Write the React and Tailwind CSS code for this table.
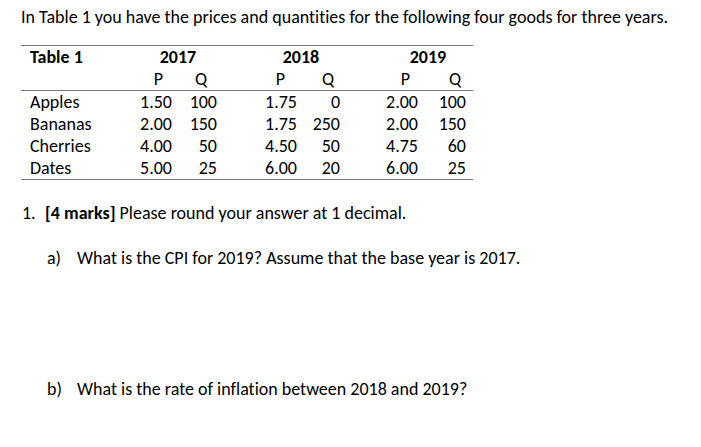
import React from "react";

const rows = [
  { name: "Apples", v: ["1.50", "100", "1.75", "0", "2.00", "100"] },
  { name: "Bananas", v: ["2.00", "150", "1.75", "250", "2.00", "150"] },
  { name: "Cherries", v: ["4.00", "50", "4.50", "50", "4.75", "60"] },
  { name: "Dates", v: ["5.00", "25", "6.00", "20", "6.00", "25"] },
];

// column widths: label, P17, Q17, P18, Q18, P19, Q19
const cols = "grid grid-cols-[79px_72px_45px_80px_43px_78px_55px]";

const App = () => {
  return (
    <div
      className="w-[701px] h-[447px] bg-white text-black text-[18px] leading-[22px] [font-variant-ligatures:none]"
      style={{ fontFamily: "Carlito, 'Open Sans', sans-serif" }}
    >
      <p className="pl-[21px] pt-[6px]">
        In Table 1 you have the prices and quantities for the following four goods for three years.
      </p>

      <div className="ml-[21px] mt-[17px] w-[452px]">
        <div className="border-t border-[#7a7a7a]" />
        <div className={`${cols} font-bold`}>
          <div className="pl-[9px]">Table 1</div>
          <div className="col-span-2 text-center pl-[39px]">2017</div>
          <div className="col-span-2 text-center pl-[45px]">2018</div>
          <div className="col-span-2 text-center pl-[43px]">2019</div>
        </div>
        <div className={cols}>
          <div />
          <div className="text-right pr-[9px]">P</div>
          <div className="text-right pr-[10px]">Q</div>
          <div className="text-right pr-[12px]">P</div>
          <div className="text-right pr-[6px]">Q</div>
          <div className="text-right pr-[8px]">P</div>
          <div className="text-right pr-[12px]">Q</div>
        </div>
        <div className="border-t border-[#7a7a7a]" />
        {rows.map((r) => (
          <div key={r.name} className={cols}>
            <div className="pl-[9px]">{r.name}</div>
            {r.v.map((x, i) => (
              <div key={i} className={i === 5 ? "text-right pr-[7px]" : "text-right"}>
                {x}
              </div>
            ))}
          </div>
        ))}
        <div className="border-t border-[#7a7a7a]" />
      </div>

      <div className="mt-[22px] pl-[22px] flex">
        <span className="w-[23px]">1.</span>
        <span>
          <b>[4 marks]</b> Please round your answer at 1 decimal.
        </span>
      </div>

      <div className="mt-[23px] pl-[47px] flex">
        <span className="w-[30px]">a)</span>
        <span>What is the CPI for 2019? Assume that the base year is 2017.</span>
      </div>

      <div className="mt-[109px] pl-[47px] flex">
        <span className="w-[30px]">b)</span>
        <span>What is the rate of inflation between 2018 and 2019?</span>
      </div>
    </div>
  );
};

export default App;
